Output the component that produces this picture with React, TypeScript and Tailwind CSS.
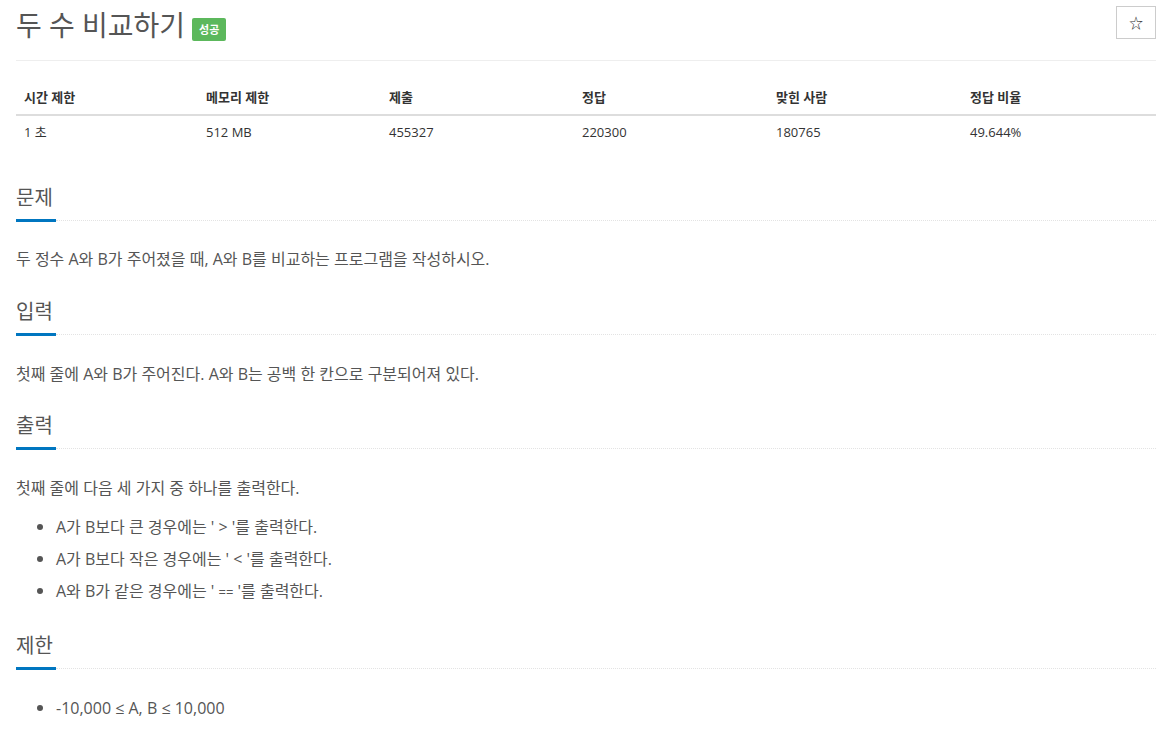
import React from 'react';

const font = { fontFamily: '"Open Sans", "Noto Sans CJK KR", sans-serif' };

const stats = [
  { label: '시간 제한', value: '1 초' },
  { label: '메모리 제한', value: '512 MB' },
  { label: '제출', value: '455327' },
  { label: '정답', value: '220300' },
  { label: '맞힌 사람', value: '180765' },
  { label: '정답 비율', value: '49.644%' },
];

const SectionTitle: React.FC<{ title: string; className?: string }> = ({ title, className = '' }) => (
  <div className={className}>
    <h2 className="text-[20px] leading-[28px] text-[#555] pb-[7px]">{title}</h2>
    <div className="flex items-start h-[3px]">
      <div className="w-[40px] h-[3px] bg-[#0076c0]" />
      <div className="flex-1 mt-[1px] border-t border-dotted border-[#e3e3e3]" />
    </div>
  </div>
);

const Bullet: React.FC<{ children: React.ReactNode; className?: string }> = ({ children, className = '' }) => (
  <li className={`flex items-center h-[24px] ${className}`}>
    <span className="w-[6px] h-[6px] rounded-full bg-[#555] ml-[21px] mr-[13px]" />
    <span>{children}</span>
  </li>
);

export default function App() {
  return (
    <div className="bg-white w-[1162px] h-[733px] overflow-hidden pl-4 pr-[6px] text-[#555]" style={font}>
      {/* Header */}
      <div className="flex items-start justify-between h-[61px] border-b border-[#eee]">
        <div className="flex items-center pt-[9px]">
          <h1 className="text-[28px] leading-[33px] text-[#555]">두 수 비교하기</h1>
          <span className="ml-[7px] mt-[7px] bg-[#5cb85c] text-white text-[11px] font-bold leading-[23px] px-[7px] rounded-[2px]">
            성공
          </span>
        </div>
        <button className="mt-[6px] w-[40px] h-[33px] border border-[#ccc] flex items-center justify-center text-[14px] text-[#333] bg-white">
          ☆
        </button>
      </div>

      {/* Stats table */}
      <div className="mt-[20px] text-[13px]">
        <div className="grid grid-cols-[182px_183px_193px_194px_194px_1fr] border-b-2 border-[#ddd]">
          {stats.map((s) => (
            <div key={s.label} className="px-2 h-[33px] flex items-center font-bold text-[#333]">
              {s.label}
            </div>
          ))}
        </div>
        <div className="grid grid-cols-[182px_183px_193px_194px_194px_1fr]">
          {stats.map((s) => (
            <div key={s.label} className="px-2 h-[34px] flex items-center text-[#333]">
              {s.value}
            </div>
          ))}
        </div>
      </div>

      {/* 문제 */}
      <SectionTitle title="문제" className="mt-[34px]" />
      <p className="mt-[25px] text-[16px] leading-[24px]">
        두 정수 A와 B가 주어졌을 때, A와 B를 비교하는 프로그램을 작성하시오.
      </p>

      {/* 입력 */}
      <SectionTitle title="입력" className="mt-[27px]" />
      <p className="mt-[26px] text-[16px] leading-[24px]">
        첫째 줄에 A와 B가 주어진다. A와 B는 공백 한 칸으로 구분되어져 있다.
      </p>

      {/* 출력 */}
      <SectionTitle title="출력" className="mt-[26px]" />
      <p className="mt-[26px] text-[16px] leading-[24px]">첫째 줄에 다음 세 가지 중 하나를 출력한다.</p>
      <ul className="mt-[15px] text-[16px] flex flex-col gap-[8px]">
        <Bullet>A가 B보다 큰 경우에는 '&nbsp;&gt;&nbsp;'를 출력한다.</Bullet>
        <Bullet>A가 B보다 작은 경우에는 '&nbsp;&lt;&nbsp;'를 출력한다.</Bullet>
        <Bullet>
          A와 B가 같은 경우에는 '&nbsp;<span className="text-[13px]">==</span>&nbsp;'를 출력한다.
        </Bullet>
      </ul>

      {/* 제한 */}
      <SectionTitle title="제한" className="mt-[29px]" />
      <ul className="mt-[26px] text-[16px]">
        <Bullet>-10,000 ≤ A, B ≤ 10,000</Bullet>
      </ul>
    </div>
  );
}
